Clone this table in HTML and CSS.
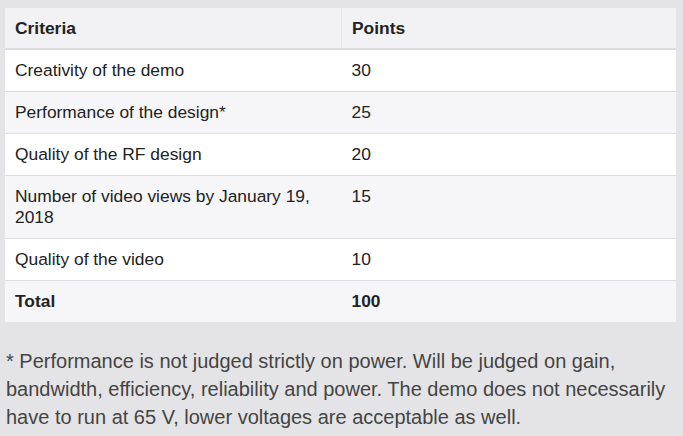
FILE: index.html
```html
<!DOCTYPE html>
<html>
<head>
<meta charset="utf-8">
<link rel="stylesheet" href="styles.css">
</head>
<body>
<table class="crit">
  <thead>
    <tr><th class="c1">Criteria</th><th>Points</th></tr>
  </thead>
  <tbody>
    <tr><td>Creativity of the demo</td><td>30</td></tr>
    <tr><td>Performance of the design*</td><td>25</td></tr>
    <tr><td>Quality of the RF design</td><td>20</td></tr>
    <tr><td>Number of video views by January 19, 2018</td><td>15</td></tr>
    <tr><td>Quality of the video</td><td>10</td></tr>
    <tr class="total"><td>Total</td><td>100</td></tr>
  </tbody>
</table>
<p class="note">* Performance is not judged strictly on power. Will be judged on gain, bandwidth, efficiency, reliability and power. The demo does not necessarily have to run at 65 V, lower voltages are acceptable as well.</p>
</body>
</html>
```

FILE: styles.css
```css
html, body {
  margin: 0;
  padding: 0;
  background: #e4e4e6;
  font-family: "Liberation Sans", Arial, sans-serif;
}
body {
  padding: 8px 7px 0 5px;
}
.crit {
  width: 671px;
  border-collapse: collapse;
  table-layout: fixed;
  font-size: 17.4px;
  color: #222;
}
.crit th, .crit td {
  text-align: left;
  vertical-align: top;
  padding: 10px 11px 10px 10px;
  line-height: 21px;
}
.crit th {
  background: #f2f2f4;
  font-weight: bold;
  border-bottom: 2px solid #dcdcde;
  padding-top: 10px;
  padding-bottom: 9px;
}
.crit th.c1 {
  width: 315px;
  border-right: 1px solid #e6e6e8;
}
.crit td {
  border-bottom: 1px solid #dddddf;
}
.crit td:first-child {
  width: 315px;
}
.crit tbody tr:nth-child(odd) td { background: #ffffff; }
.crit tbody tr:nth-child(even) td { background: #f6f6f8; }
.crit tr.total td {
  font-weight: bold;
  border-bottom: none;
}
.note {
  margin: 25px 0 0 1px;
  font-size: 20px;
  line-height: 28px;
  color: #444;
}
```
